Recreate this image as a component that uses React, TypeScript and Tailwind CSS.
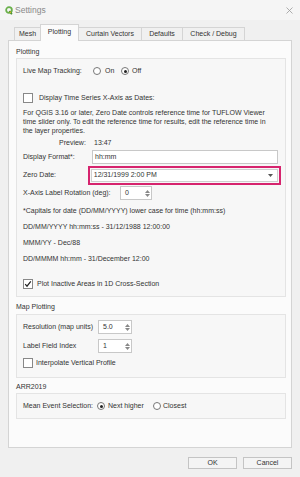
import React from "react";

const F = { fontFamily: '"Liberation Sans", Arial, sans-serif' };

function Radio({ checked }: { checked?: boolean }) {
  return (
    <span className="inline-flex shrink-0 w-[8px] h-[8px] rounded-full border border-[#777] bg-white items-center justify-center">
      {checked && <span className="w-[3px] h-[3px] rounded-full bg-[#222]" />}
    </span>
  );
}

function Check({ checked }: { checked?: boolean }) {
  return (
    <span className="inline-flex shrink-0 w-[10px] h-[10px] border border-[#888] bg-white items-center justify-center">
      {checked && (
        <svg width="8" height="8" viewBox="0 0 8 8">
          <path d="M1.2 4.2 L3 6.2 L6.8 1.4" fill="none" stroke="#222" strokeWidth="1.2" />
        </svg>
      )}
    </span>
  );
}

function Spin({ value, w }: { value: string; w: string }) {
  return (
    <div className={`flex h-[14px] border border-[#c8c8c8] bg-white ${w}`}>
      <div className="flex-1 pl-[4px] flex items-center">{value}</div>
      <div className="w-[8px] flex flex-col items-center justify-center gap-[1px]">
        <svg width="5" height="3" viewBox="0 0 5 3"><path d="M0 3 L2.5 0 L5 3Z" fill="#888" /></svg>
        <svg width="5" height="3" viewBox="0 0 5 3"><path d="M0 0 L2.5 3 L5 0Z" fill="#888" /></svg>
      </div>
    </div>
  );
}

export default function App() {
  return (
    <div style={F} className="w-[300px] h-[477px] bg-[#f0f0f0] flex flex-col text-[7px] text-[#333] overflow-hidden">
      {/* title bar */}
      <div className="shrink-0 h-[20px] bg-[#f5f5f5] flex items-center pl-[5px] pr-[7px]">
        <svg width="8" height="9" viewBox="0 0 10 11">
          <circle cx="5" cy="5" r="3.6" fill="none" stroke="#6ab04c" strokeWidth="2.2" />
          <path d="M5.5 6 L8.6 10.2" stroke="#4d8f2f" strokeWidth="2.2" />
          <circle cx="6.6" cy="7.6" r="0.9" fill="#f0c419" />
        </svg>
        <span className="ml-[2px] text-[8.5px] text-[#8a8a8a]">Settings</span>
        <span className="ml-auto">
          <svg width="7" height="7" viewBox="0 0 7 7"><path d="M0.5 0.5 L6.5 6.5 M6.5 0.5 L0.5 6.5" stroke="#9a9a9a" strokeWidth="0.8" /></svg>
        </span>
      </div>

      {/* tabs */}
      <div className="shrink-0 flex items-end pl-[14px] h-[20px]">
        <div className="h-[13px] flex items-center border border-[#d4d4d4] border-b-0 bg-[#f0f0f0] w-[27px] justify-center">Mesh</div>
        <div className="h-[17px] -mb-[1px] flex items-center border border-[#d4d4d4] border-b-0 bg-[#fbfbfb] w-[39px] justify-center relative z-10 -ml-[1px] pb-[1px]">Plotting</div>
        <div className="h-[13px] flex items-center border border-[#d4d4d4] border-b-0 border-l-0 bg-[#f0f0f0] w-[63px] justify-center">Curtain Vectors</div>
        <div className="h-[13px] flex items-center border border-[#d4d4d4] border-b-0 border-l-0 bg-[#f0f0f0] w-[41px] justify-center">Defaults</div>
        <div className="h-[13px] flex items-center border border-[#d4d4d4] border-b-0 border-l-0 bg-[#f0f0f0] w-[62px] justify-center">Check / Debug</div>
      </div>

      {/* pane */}
      <div className="shrink-0 mx-[8px] h-[408px] border border-[#d4d4d4] bg-[#fbfbfb] flex flex-col pl-[7px] pr-[5px]">
        <div className="shrink-0 mt-[6px] h-[10px] flex items-center">Plotting</div>
        <div className="shrink-0 mt-[1px] border border-[#e4e4e4] bg-[#f7f7f7] h-[239px] flex flex-col pl-[6px] pr-[4px]">
          <div className="flex items-center h-[12px] mt-[6px]">
            <span className="w-[70px]">Live Map Tracking:</span>
            <Radio /><span className="ml-[4px] w-[16px]">On</span>
            <Radio checked /><span className="ml-[3px]">Off</span>
          </div>
          <div className="flex items-center h-[12px] mt-[15px]">
            <Check /><span className="ml-[6px]">Display Time Series X-Axis as Dates:</span>
          </div>
          <div className="mt-[4px] leading-[9px] w-[253px]">
            For QGIS 3.16 or later, Zero Date controls reference time for TUFLOW Viewer time slider only. To edit the reference time for results, edit the reference time in the layer properties.
          </div>
          <div className="flex h-[10px] items-center mt-[3px]">
            <span className="ml-[36px] w-[35px]">Preview:</span>
            <span>13:47</span>
          </div>
          <div className="flex items-center mt-[2px] h-[14px]">
            <span className="w-[69px]">Display Format*:</span>
            <div className="w-[186px] h-[14px] border border-[#c8c8c8] bg-white flex items-center pl-[2px]">hh:mm</div>
          </div>
          <div className="flex items-center mt-[2px] h-[19px]">
            <span className="w-[65px]">Zero Date:</span>
            <div className="w-[194px] h-[19px] border-[2px] border-[#d6246e] flex p-[1px]">
              <div className="flex-1 h-full border border-[#cfcfcf] bg-white flex items-center pl-[2px]">
                <span>12/31/1999 2:00 PM</span>
                <svg className="ml-auto mr-[4px]" width="5" height="3" viewBox="0 0 5 3"><path d="M0 0 L2.5 3 L5 0Z" fill="#555" /></svg>
              </div>
            </div>
          </div>
          <div className="flex items-center mt-[1px] h-[14px]">
            <span className="w-[97px]">X-Axis Label Rotation (deg):</span>
            <Spin value="0" w="w-[32px]" />
          </div>
          <div className="mt-[6px] h-[10px] flex items-center">*Capitals for date (DD/MM/YYYY) lower case for time (hh:mm:ss)</div>
          <div className="mt-[6px] h-[10px] flex items-center">DD/MM/YYYY hh:mm:ss - 31/12/1988 12:00:00</div>
          <div className="mt-[6px] h-[10px] flex items-center">MMM/YY - Dec/88</div>
          <div className="mt-[6px] h-[10px] flex items-center">DD/MMMM hh:mm - 31/December 12:00</div>
          <div className="flex items-center mt-[14px] h-[12px]">
            <Check checked /><span className="ml-[4px]">Plot Inactive Areas in 1D Cross-Section</span>
          </div>
        </div>

        <div className="shrink-0 mt-[5px] h-[10px] flex items-center">Map Plotting</div>
        <div className="shrink-0 mt-[2px] border border-[#e4e4e4] bg-[#f7f7f7] h-[64px] flex flex-col pl-[6px]">
          <div className="flex items-center mt-[5px] h-[14px]">
            <span className="w-[75px]">Resolution (map units)</span>
            <Spin value="5.0" w="w-[34px]" />
          </div>
          <div className="flex items-center mt-[5px] h-[14px]">
            <span className="w-[75px]">Label Field Index</span>
            <Spin value="1" w="w-[34px]" />
          </div>
          <div className="flex items-center mt-[4px] h-[12px]">
            <Check /><span className="ml-[3px]">Interpolate Vertical Profile</span>
          </div>
        </div>

        <div className="shrink-0 mt-[4px] h-[10px] flex items-center">ARR2019</div>
        <div className="shrink-0 mt-[1px] border border-[#e4e4e4] bg-[#f7f7f7] h-[26px] flex items-center pl-[6px]">
          <span className="w-[74px]">Mean Event Selection:</span>
          <Radio checked /><span className="ml-[3px] w-[45px]">Next higher</span>
          <Radio /><span className="ml-[2px]">Closest</span>
        </div>
      </div>

      {/* buttons */}
      <div className="shrink-0 flex justify-end gap-[6px] mt-[9px] pr-[8px]">
        <div className="w-[49px] h-[12px] border border-[#c4c4c4] bg-[#f4f4f4] flex items-center justify-center">OK</div>
        <div className="w-[49px] h-[12px] border border-[#c4c4c4] bg-[#f4f4f4] flex items-center justify-center">Cancel</div>
      </div>
    </div>
  );
}
